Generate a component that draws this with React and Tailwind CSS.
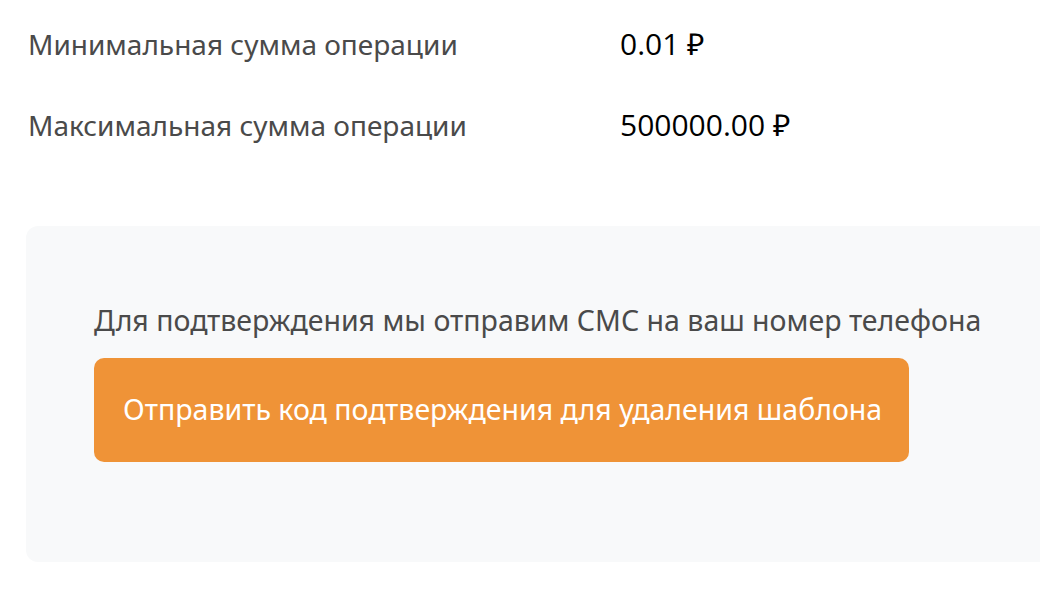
export default function App() {
  return (
    <div className="w-[1040px] h-[594px] bg-white overflow-hidden" style={{ fontFamily: '"Noto Sans", sans-serif' }}>
      <div className="pt-[24px] pl-[28px]">
        <div className="flex items-center h-[40px]">
          <div className="w-[592px] text-[28px] text-[#4a4a4a] leading-none">Минимальная сумма операции</div>
          <div className="text-[30px] text-black leading-none font-['Open_Sans',sans-serif]">0.01 ₽</div>
        </div>
        <div className="flex items-center h-[40px] mt-[41px]">
          <div className="w-[592px] text-[28px] text-[#4a4a4a] leading-none">Максимальная сумма операции</div>
          <div className="text-[30px] text-black leading-none font-['Open_Sans',sans-serif]">500000.00 ₽</div>
        </div>
      </div>
      <div className="ml-[26px] mt-[81px] h-[336px] rounded-l-[12px] bg-[#f8f9fa] pl-[68px] pt-[80px]">
        <div className="text-[28.5px] text-[#4a4a4a] leading-none">Для подтверждения мы отправим СМС на ваш номер телефона</div>
        <button className="mt-[23px] w-[815px] h-[104px] rounded-[10px] bg-[#ef9337] text-white text-[28.5px] leading-none text-left pl-[29px]">Отправить код подтверждения для удаления шаблона</button>
      </div>
    </div>
  );
}
